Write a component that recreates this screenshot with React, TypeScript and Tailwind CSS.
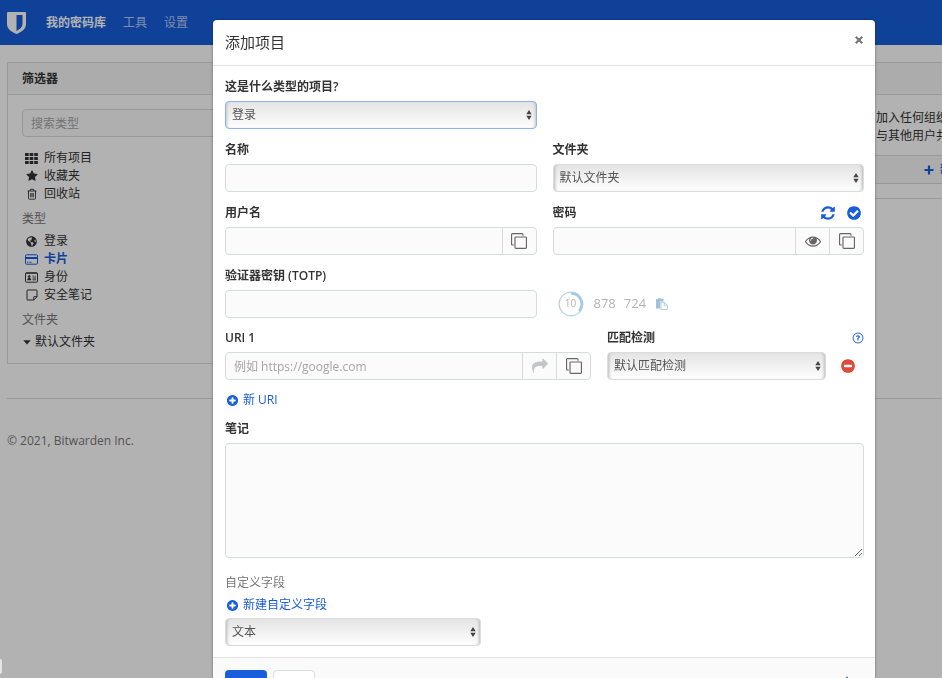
import { useState } from "react";
import type { ReactNode, SelectHTMLAttributes } from "react";
import { FaGlobeAmericas } from "react-icons/fa";

const CIRCLE =
  "M1664 896q0 209-103 385.5t-279.5 279.5-385.5 103-385.5-103-279.5-279.5-103-385.5 103-385.5 279.5-279.5 385.5-103 385.5 103 279.5 279.5 103 385.5z";

const PATHS = {
  refresh:
    "M1639 1056q0 5-1 7-64 268-268 434.5t-478 166.5q-146 0-282.5-55t-243.5-157l-129 129q-19 19-45 19t-45-19-19-45v-448q0-26 19-45t45-19h448q26 0 45 19t19 45-19 45l-137 137q71 66 161 102t187 36q134 0 250-65t186-179q11-17 53-117 8-23 30-23h192q13 0 22.5 9.5t9.5 22.5zm25-800v448q0 26-19 45t-45 19h-448q-26 0-45-19t-19-45 19-45l138-138q-148-137-349-137-134 0-250 65t-186 179q-11 17-53 117-8 23-30 23h-199q-13 0-22.5-9.5t-9.5-22.5v-7q65-268 270-434.5t480-166.5q146 0 284 55.5t245 156.5l130-129q19-19 45-19t45 19 19 45z",
  check:
    "M1412 734q0-28-18-46l-91-90q-19-19-45-19t-45 19l-408 407-226-226q-19-19-45-19t-45 19l-91 90q-18 18-18 46 0 27 18 45l362 362q19 19 45 19 27 0 46-19l543-543q18-18 18-45z" + CIRCLE,
  plusCircle:
    "M1344 960v-128q0-26-19-45t-45-19h-256v-256q0-26-19-45t-45-19h-128q-26 0-45 19t-19 45v256h-256q-26 0-45 19t-19 45v128q0 26 19 45t45 19h256v256q0 26 19 45t45 19h128q26 0 45-19t19-45v-256h256q26 0 45-19t19-45z" + CIRCLE,
  minusCircle:
    "M1344 960v-128q0-26-19-45t-45-19h-768q-26 0-45 19t-19 45v128q0 26 19 45t45 19h768q26 0 45-19t19-45z" + CIRCLE,
  share:
    "M1792 640q0 26-19 45l-512 512q-19 19-45 19t-45-19-19-45v-256h-224q-98 0-175.5 6t-154 21.5-133 42.5-105.5 69.5-80 101-48.5 138.5-17.5 181q0 55 5 123 0 6 2.5 23.5t2.5 26.5q0 15-8.5 25t-23.5 10q-16 0-28-17-7-9-13-22t-13.5-30-10.5-24q-127-285-127-451 0-199 53-333 162-403 875-403h224v-256q0-26 19-45t45-19 45 19l512 512q19 19 19 45z",
  clone:
    "M1664 1632v-1088q0-13-9.5-22.5t-22.5-9.5h-1088q-13 0-22.5 9.5t-9.5 22.5v1088q0 13 9.5 22.5t22.5 9.5h1088q13 0 22.5-9.5t9.5-22.5zm128-1088v1088q0 66-47 113t-113 47h-1088q-66 0-113-47t-47-113v-1088q0-66 47-113t113-47h1088q66 0 113 47t47 113zm-384-384v160h-128v-160q0-13-9.5-22.5t-22.5-9.5h-1088q-13 0-22.5 9.5t-9.5 22.5v1088q0 13 9.5 22.5t22.5 9.5h160v128h-160q-66 0-113-47t-47-113v-1088q0-66 47-113t113-47h1088q66 0 113 47t47 113z",
  eye:
    "M1664 960q-152-236-381-353 61 104 61 225 0 185-131.5 316.5t-316.5 131.5-316.5-131.5-131.5-316.5q0-121 61-225-229 117-381 353 133 205 333.5 326.5t434.5 121.5 434.5-121.5 333.5-326.5zm-720-384q0-20-14-34t-34-14q-125 0-214.5 89.5t-89.5 214.5q0 20 14 34t34 14 34-14 14-34q0-86 61-147t147-61q20 0 34-14t14-34zm848 384q0 34-20 69-140 230-376.5 368.5t-499.5 138.5-499.5-139-376.5-368q-20-35-20-69t20-69q140-229 376.5-368t499.5-139 499.5 139 376.5 368q20 35 20 69z",
  star:
    "M1728 647q0 22-26 48l-363 354 86 500q1 7 1 20 0 21-10.5 35.5t-30.5 14.5q-19 0-40-12l-449-236-449 236q-22 12-40 12-21 0-31.5-14.5t-10.5-35.5q0-6 2-20l86-500-364-354q-25-27-25-48 0-37 56-46l502-73 225-455q19-41 49-41t49 41l225 455 502 73q56 9 56 46z",
};

function Icon({ name, className }: { name: keyof typeof PATHS; className: string }) {
  return (
    <svg viewBox="0 0 1792 1792" className={className} fill="currentColor" fillRule="evenodd" aria-hidden="true">
      <path d={PATHS[name]} />
    </svg>
  );
}

function ShieldLogo() {
  return (
    <svg viewBox="0 0 19 22" className="w-[19px] h-[22px]" fill="#fff" fillRule="evenodd" aria-hidden="true">
      <path d="M1 0h17q1 0 1 1v11c0 5-4.500 8-9.500 10C4.500 20 0 17 0 12V1q0-1 1-1zM9.500 3v16c3.500-1.800 6-4 6-7V3z" />
    </svg>
  );
}

function GridIcon() {
  return (
    <svg viewBox="0 0 13 11" className="w-[13px] h-[11px]" fill="currentColor" aria-hidden="true">
      {[0, 4, 8].map((y) =>
        [0, 4.6, 9.2].map((x) => <rect key={`${x}-${y}`} x={x} y={y} width="3.7" height="3" rx="0.5" />)
      )}
    </svg>
  );
}

function TrashIcon() {
  return (
    <svg viewBox="0 0 12 12" className="size-3" fill="none" stroke="currentColor" aria-hidden="true">
      <path d="M1.500 3h9M4.200 3V1.300h3.600V3M2.500 3v7.200q0 1 1 1h5q1 0 1-1V3M4.700 5v4.200M6 5v4.200M7.300 5v4.200" strokeWidth="0.9" />
    </svg>
  );
}

function CardIcon() {
  return (
    <svg viewBox="0 0 13 11" className="w-[13px] h-[11px]" fill="none" stroke="currentColor" aria-hidden="true">
      <rect x="0.5" y="0.8" width="12" height="9.4" rx="1" />
      <path d="M0.500 4h12" strokeWidth="2" />
      <path d="M2 8.200h1.500M4.500 8.200h2" />
    </svg>
  );
}

function IdentityIcon() {
  return (
    <svg viewBox="0 0 13 11" className="w-[13px] h-[11px]" fill="none" stroke="currentColor" aria-hidden="true">
      <rect x="0.5" y="0.8" width="12" height="9.4" rx="0.8" />
      <path d="M1 1.200h11" />
      <circle cx="4.200" cy="4.600" r="1.300" fill="currentColor" stroke="none" />
      <path d="M2.200 8.300c0-1.800 1-2.300 2-2.300s2 .5 2 2.300z" fill="currentColor" stroke="none" />
      <path d="M7.500 4.200h1.500M9.800 4.200h1M7.500 6h3.500M7.500 7.800h3.500" strokeWidth="0.9" />
    </svg>
  );
}

function NoteIcon() {
  return (
    <svg viewBox="0 0 12 12" className="size-3" fill="none" stroke="currentColor" aria-hidden="true">
      <path d="M1 1.500q0-.5.500-.5h9q.5 0 .5.500v6.300L7.800 11H1.500q-.5 0-.5-.5zM11 7.700H8.200q-.5 0-.5.500V11" />
    </svg>
  );
}

type PickerProps = SelectHTMLAttributes<HTMLSelectElement> & {
  value: string;
  wrap?: string;
  focused?: boolean;
};

function Picker({ value, wrap = "", focused, ...rest }: PickerProps) {
  return (
    <div className={`relative ${wrap}`}>
      <select
        {...rest}
        defaultValue={value}
        className={`block w-full h-7 appearance-none rounded border pl-1.5 pr-6 text-xs text-[#555] outline-none bg-linear-to-b from-[#e4e4e4] to-[#fefefe] ${
          focused
            ? "border-[#8db2f3] shadow-[inset_3px_0_3px_-2px_#c4c4c4,inset_-3px_0_3px_-2px_#c4c4c4]"
            : "border-[#d9dddd] shadow-[inset_3px_0_3px_-2px_#b8b8b8,inset_-3px_0_3px_-2px_#b8b8b8]"
        }`}
      >
        <option>{value}</option>
      </select>
      <svg viewBox="0 0 6 10" className="absolute right-[5px] top-[9px] w-1.5 h-2.5 pointer-events-none" fill="#444" aria-hidden="true">
        <path d="M3 0l2.700 4.200H.3zM3 10L.3 5.800h5.400z" />
      </svg>
    </div>
  );
}

function Label({ htmlFor, children }: { htmlFor: string; children: ReactNode }) {
  return (
    <label htmlFor={htmlFor} className="block text-xs leading-[18px] font-semibold text-[#333]">
      {children}
    </label>
  );
}

const inputClass = "min-w-0 w-full h-7 border border-[#d6dbdb] bg-[#fbfbfb] px-2 text-xs text-[#555] placeholder:text-[#a5a5a5] outline-none";
const addonClass = "flex shrink-0 w-[35px] h-7 -ml-px items-center justify-center border border-[#d6dbdb] bg-[#fbfbfb] text-[#666]";

function SideItem({ icon, active, children }: { icon: ReactNode; active?: boolean; children: ReactNode }) {
  return (
    <li>
      <a href="#" className={`flex items-center leading-[18px] ${active ? "font-semibold text-[#175ddc]" : "text-[#333]"}`}>
        <span className="flex w-[13px] mr-1.5 justify-center">{icon}</span>
        {children}
      </a>
    </li>
  );
}

function Sidebar() {
  return (
    <aside className="w-[260px] border border-[#dcdcdc] bg-white">
      <h2 className="h-8 px-3.5 border-b border-[#dcdcdc] bg-[#f7f7f7] font-bold leading-8 text-[#333]">筛选器</h2>
      <div className="px-3.5 pt-3.5 pb-3">
        <input type="search" aria-label="搜索类型" placeholder="搜索类型" className={`${inputClass} rounded`} />
        <ul className="mt-3 pl-[3px]">
          <SideItem icon={<GridIcon />}>所有项目</SideItem>
          <SideItem icon={<Icon name="star" className="size-3" />}>收藏夹</SideItem>
          <SideItem icon={<TrashIcon />}>回收站</SideItem>
        </ul>
        <h3 className="mt-[7px] leading-[18px] text-[#777]">类型</h3>
        <ul className="mt-1 pl-[3px]">
          <SideItem icon={<FaGlobeAmericas className="size-[11px]" />}>登录</SideItem>
          <SideItem icon={<CardIcon />} active>卡片</SideItem>
          <SideItem icon={<IdentityIcon />}>身份</SideItem>
          <SideItem icon={<NoteIcon />}>安全笔记</SideItem>
        </ul>
        <h3 className="mt-[7px] leading-[18px] text-[#777]">文件夹</h3>
        <a href="#" className="flex mt-1 items-center gap-1 pl-px leading-[18px] text-[#333]">
          <svg viewBox="0 0 8 5" className="w-2 h-[5px]" fill="currentColor" aria-hidden="true">
            <path d="M.3.300h7.400L4 4.500z" />
          </svg>
          默认文件夹
        </a>
      </div>
    </aside>
  );
}

function OrganizationCard() {
  return (
    <div className="w-[100px] whitespace-nowrap text-[#333]">
      <div className="border-y border-[#dcdcdc]">
        <div className="h-8 border-b border-[#dcdcdc] bg-[#f7f7f7]" />
        <p className="h-[60px] pt-3.5 pl-[34px] leading-[18px]">
          加入任何组织
          <br />
          与其他用户共
        </p>
        <div className="flex h-7 items-center gap-1.5 border-t border-[#dcdcdc] bg-[#f7f7f7] pl-[82px] text-[#175ddc]">
          <svg viewBox="0 0 10 10" className="size-2.5 shrink-0" stroke="currentColor" strokeWidth="2.200" aria-hidden="true">
            <path d="M5 .5v9M.5 5h9" />
          </svg>
          <a href="#" className="font-semibold">新</a>
        </div>
      </div>
      <div className="mt-3.5 border-t border-[#dcdcdc]" />
    </div>
  );
}

function CopyButton({ label }: { label: string }) {
  return (
    <button type="button" aria-label={label} className={`${addonClass} rounded-r`}>
      <Icon name="clone" className="size-4" />
    </button>
  );
}

function AddLink({ children }: { children: ReactNode }) {
  return (
    <a href="#" className="inline-flex items-center gap-1 pl-px text-xs leading-[18px] text-[#175ddc]">
      <Icon name="plusCircle" className="size-[13px]" />
      {children}
    </a>
  );
}

function TotpCode() {
  return (
    <div className="flex items-center pt-[22px] pl-[5px] text-[#b4b4b4]">
      <div className="relative size-[26px]">
        <svg viewBox="0 0 26 26" className="size-[26px]" fill="none" aria-hidden="true">
          <circle cx="13" cy="13" r="11.800" stroke="#b4d2e6" strokeWidth="1.300" />
          <path d="M13 2.200A10.800 10.800 0 0 1 21 20" stroke="#a5cae2" strokeWidth="2.400" />
        </svg>
        <span className="absolute inset-0 flex items-center justify-center text-[10px]">10</span>
      </div>
      <span className="ml-2.5 text-[13px]">878</span>
      <span className="ml-2 text-[13px]">724</span>
      <button type="button" aria-label="复制验证码" className="ml-2.5">
        <svg viewBox="0 0 12 12" className="size-3" aria-hidden="true">
          <path d="M0 1h2V.3h3.500V1h2v2.500H4.200V10.500H0z" fill="#9fc3df" />
          <path d="M4.900 4.300h3.600l2.800 2.800v4.400H4.900zM8.300 4.300v3h3" fill="#fff" stroke="#a9c9df" strokeWidth="0.9" />
        </svg>
      </button>
    </div>
  );
}

function AddItemModal() {
  const [showPassword, setShowPassword] = useState(false);

  return (
    <div role="dialog" aria-labelledby="modal-title" className="min-w-0 flex-1 mt-5 self-start rounded bg-white shadow-[0_0_3px_rgba(0,0,0,0.4)]">
      <div className="flex h-[46px] items-center justify-between border-b border-[#dee2e2] px-3 pb-0.5">
        <h1 id="modal-title" className="text-[15px] text-[#333]">添加项目</h1>
        <button type="button" aria-label="关闭" className="-mt-1 text-[#777]">
          <svg viewBox="0 0 8 8" className="size-2" stroke="currentColor" strokeWidth="2.200" aria-hidden="true">
            <path d="M.8.8l6.400 6.400M7.200.8L.8 7.200" />
          </svg>
        </button>
      </div>

      <div className="pt-3 pb-[11px] pl-3 pr-[11px]">
        <div className="grid grid-cols-2 gap-x-4 gap-y-3">
          <div>
            <Label htmlFor="type">这是什么类型的项目?</Label>
            <Picker id="type" value="登录" wrap="mt-[5px]" focused />
          </div>
          <div />
          <div>
            <Label htmlFor="name">名称</Label>
            <input id="name" className={`${inputClass} mt-[5px] rounded`} />
          </div>
          <div>
            <Label htmlFor="folder">文件夹</Label>
            <Picker id="folder" value="默认文件夹" wrap="mt-[5px]" />
          </div>
          <div>
            <Label htmlFor="username">用户名</Label>
            <div className="flex mt-[5px]">
              <input id="username" className={`${inputClass} rounded-l`} />
              <CopyButton label="复制用户名" />
            </div>
          </div>
          <div>
            <div className="flex items-center justify-between">
              <Label htmlFor="password">密码</Label>
              <div className="flex gap-2.5 pr-0.5 text-[#175ddc]">
                <button type="button" aria-label="生成密码">
                  <Icon name="refresh" className="size-4" />
                </button>
                <button type="button" aria-label="检查密码">
                  <Icon name="check" className="size-4" />
                </button>
              </div>
            </div>
            <div className="flex mt-[5px]">
              <input id="password" type={showPassword ? "text" : "password"} className={`${inputClass} rounded-l`} />
              <button type="button" aria-label="切换可见性" className={addonClass} onClick={() => setShowPassword(!showPassword)}>
                <Icon name="eye" className="size-4" />
              </button>
              <CopyButton label="复制密码" />
            </div>
          </div>
          <div>
            <Label htmlFor="totp">验证器密钥 (TOTP)</Label>
            <input id="totp" className={`${inputClass} mt-[5px] rounded`} />
          </div>
          <TotpCode />
        </div>

        <div className="grid grid-cols-12 gap-4 mt-[11px]">
          <div className="col-span-7">
            <Label htmlFor="uri">URI 1</Label>
            <div className="flex mt-[5px]">
              <input id="uri" placeholder="例如 https://google.com" className={`${inputClass} rounded-l`} />
              <button type="button" aria-label="启动" disabled className={addonClass}>
                <Icon name="share" className="size-4 text-[#c3c7c7]" />
              </button>
              <CopyButton label="复制 URI" />
            </div>
          </div>
          <div className="col-span-5">
            <div className="flex items-center justify-between">
              <Label htmlFor="match">匹配检测</Label>
              <a href="#" aria-label="帮助" className="text-[#175ddc]">
                <svg viewBox="0 0 1792 1792" className="size-3" fill="currentColor" aria-hidden="true">
                  <circle cx="896" cy="896" r="740" fill="none" stroke="currentColor" strokeWidth="140" />
                  <path transform="translate(180 180) scale(.78)" d="M1024 1376v-192q0-14-9-23t-23-9h-192q-14 0-23 9t-9 23v192q0 14 9 23t23 9h192q14 0 23-9t9-23zm256-672q0-88-55.500-163t-138.500-116-170-41q-243 0-371 213-15 24 8 42l132 100q7 6 19 6 16 0 25-12 53-68 86-92 34-24 86-24 48 0 85.500 26t37.500 59q0 38-20 61t-68 45q-63 28-115.500 86.500t-52.500 125.500v36q0 14 9 23t23 9h192q14 0 23-9t9-23q0-19 21.500-49.500t54.500-49.500q32-18 49-28.500t46-35 44.500-48 28-60.500 12.500-81z" />
                </svg>
              </a>
            </div>
            <div className="flex mt-[5px]">
              <Picker id="match" value="默认匹配检测" wrap="flex-1" />
              <button type="button" aria-label="移除" className="pl-3.5 pr-2 text-[#dd4b39]">
                <Icon name="minusCircle" className="size-4" />
              </button>
            </div>
          </div>
        </div>
        <div className="flex mt-[11px]">
          <AddLink>新 URI</AddLink>
        </div>

        <div className="mt-[11px]">
          <Label htmlFor="notes">笔记</Label>
          <textarea id="notes" className="block w-full h-[115px] mt-[5px] rounded border border-[#d6dbdb] bg-[#fbfbfb] p-2 text-xs outline-none" />
        </div>

        <h2 className="mt-4 text-xs leading-[18px] text-[#777]">自定义字段</h2>
        <div className="flex mt-1">
          <AddLink>新建自定义字段</AddLink>
        </div>
        <Picker aria-label="字段类型" value="文本" wrap="w-2/5 mt-1" />
      </div>

      <div className="flex items-center gap-1.5 rounded-b border-t border-[#dee2e2] bg-[#fafafa] p-3 text-xs">
        <button type="button" className="h-8 rounded bg-[#175ddc] px-[9px] text-white">保存</button>
        <button type="button" className="h-8 rounded border border-[#d6dbdb] bg-white px-2 text-[#555]">取消</button>
        <button type="button" aria-label="收藏" className="mb-1 ml-auto mr-2 text-[#175ddc]">
          <Icon name="star" className="size-4" />
        </button>
      </div>
    </div>
  );
}

export default function App() {
  return (
    <div className="min-h-screen overflow-hidden bg-white font-['Open_Sans','Noto_Sans_CJK_SC',sans-serif] text-xs">
      <header className="flex h-[45px] items-center bg-[#175ddc] pl-[7px] text-white">
        <ShieldLogo />
        <nav className="flex gap-[17px] pl-5">
          <a href="#" className="font-bold">我的密码库</a>
          <a href="#" className="text-white/70">工具</a>
          <a href="#" className="text-white/70">设置</a>
        </nav>
      </header>

      <main className="flex items-start justify-between pt-[17px] pl-[7px]">
        <Sidebar />
        <OrganizationCard />
      </main>
      <footer className="mt-[34px] ml-[7px] border-t border-[#dcdcdc] pt-[33px] leading-[18px] text-[#777]">
        © 2021, Bitwarden Inc.
      </footer>

      <div className="fixed inset-0 flex overflow-hidden bg-black/30 pl-[213px] pr-[67px]">
        <AddItemModal />
      </div>
      <div className="fixed bottom-1 left-0 h-[15px] w-0.5 rounded-r bg-[#e4e4e4]" />
    </div>
  );
}
